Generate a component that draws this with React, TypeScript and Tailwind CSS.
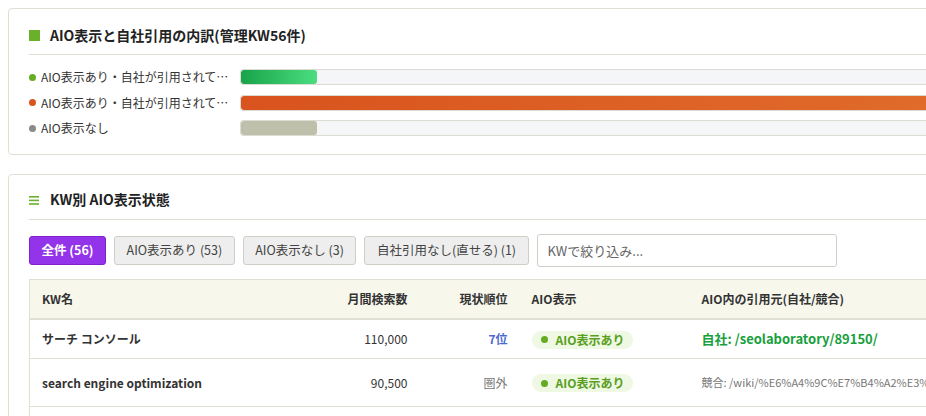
import React from 'react';

const font = { fontFamily: '"Noto Sans CJK JP", "Noto Sans", sans-serif' };

const breakdown = [
  { label: 'AIO表示あり・自社が引用されている', dot: 'bg-[#66ad22]', bar: 'bg-gradient-to-r from-[#16a34a] to-[#4ade80]', pct: 7.8 },
  { label: 'AIO表示あり・自社が引用されていない', dot: 'bg-[#d9531e]', bar: 'bg-gradient-to-r from-[#d9531e] to-[#e2742f]', pct: 100 },
  { label: 'AIO表示なし', dot: 'bg-[#8a8a8a]', bar: 'bg-[#bfc0ab]', pct: 7.8 },
];

const filters = [
  { label: '全件 (56)', active: true },
  { label: 'AIO表示あり (53)' },
  { label: 'AIO表示なし (3)' },
  { label: '自社引用なし(直せる) (1)' },
];

function Badge() {
  return (
    <span className="inline-flex h-[18px] items-center gap-2 rounded-full bg-[#eef8e2] px-[9px] text-[12px] leading-[18px] font-bold text-[#5a9e1e]">
      <span className="h-[7px] w-[7px] rounded-full bg-[#64ab1f]" />
      AIO表示あり
    </span>
  );
}

export default function App() {
  return (
    <div className="h-screen w-screen overflow-hidden bg-white text-[#333]" style={font}>
      <div className="flex w-[1240px] flex-col gap-[19px] p-2">
        {/* breakdown card */}
        <section className="rounded-[4px] border border-[#e0e0d2] bg-white px-5 pb-[18px] pt-[16px]">
          <h2 className="flex items-center gap-[10px] border-b border-[#e0e0d2] pb-[9px] text-[14px] leading-[20px] font-bold text-[#222]">
            <span className="h-[11px] w-[11px] bg-[#6bb02a]" />
            AIO表示と自社引用の内訳(管理KW56件)
          </h2>
          <div className="mt-[14px] flex flex-col gap-[9.5px]">
            {breakdown.map((b) => (
              <div key={b.label} className="flex h-[16px] items-center gap-[10px]">
                <div className="flex w-[201px] items-center gap-[5px] text-[12px] leading-[16px] text-[#333]">
                  <span className={`h-[7px] w-[7px] shrink-0 rounded-full ${b.dot}`} />
                  <span className="truncate">{b.label}</span>
                </div>
                <div className="h-[16px] flex-1 overflow-hidden rounded-[3px] border border-[#dcdcd2] bg-[#f5f6f8]">
                  <div className={`h-full rounded-[3px] ${b.bar}`} style={{ width: `${b.pct}%` }} />
                </div>
              </div>
            ))}
          </div>
        </section>

        {/* keyword status card */}
        <section className="rounded-[4px] border border-[#e0e0d2] bg-white px-5 pt-[14px]">
          <h2 className="flex items-center gap-[10px] border-b border-[#e0e0d2] pb-[10px] text-[14px] leading-[20px] font-bold text-[#222]">
            <svg width="11" height="9" viewBox="0 0 11 9" className="mt-[2px]">
              <rect x="0" y="0" width="10" height="1.6" fill="#6bb02a" />
              <rect x="0" y="3.6" width="10" height="1.6" fill="#6bb02a" />
              <rect x="0" y="7.2" width="10" height="1.6" fill="#6bb02a" />
            </svg>
            KW別 AIO表示状態
          </h2>

          <div className="mt-[14px] flex items-center gap-2">
            {filters.map((f) =>
              f.active ? (
                <button
                  key={f.label}
                  className="h-[29px] rounded-[3px] border border-[#7e22ce] bg-[#9333ea] px-[11.5px] text-[12.5px] font-bold text-white"
                >
                  {f.label}
                </button>
              ) : (
                <button
                  key={f.label}
                  className="h-[29px] rounded-[3px] border border-[#cfcfc8] bg-[#eeeeee] px-[11.5px] text-[12.5px] text-[#444]"
                >
                  {f.label}
                </button>
              )
            )}
            <input
              placeholder="KWで絞り込み..."
              className="h-[33px] w-[300px] rounded-[3px] border border-[#cfcfc8] px-[10px] text-[13px] placeholder:text-[#666]"
            />
          </div>

          <table className="mt-[12px] w-full table-fixed border-collapse border border-[#e0e0d2] text-[12px]">
            <colgroup>
              <col className="w-[270px]" />
              <col className="w-[120px]" />
              <col className="w-[100px]" />
              <col className="w-[170px]" />
              <col />
            </colgroup>
            <thead>
              <tr className="h-[39px] border-b-2 border-[#e0e0d2] bg-[#f7f7ec] text-left font-bold text-[#333]">
                <th className="px-3">KW名</th>
                <th className="px-3 text-right">月間検索数</th>
                <th className="px-3 text-right">現状順位</th>
                <th className="px-3">AIO表示</th>
                <th className="px-3">AIO内の引用元(自社/競合)</th>
              </tr>
            </thead>
            <tbody>
              <tr className="h-[40px] border-b border-[#e0e0d2]">
                <td className="px-3 font-bold">サーチ コンソール</td>
                <td className="px-3 text-right">110,000</td>
                <td className="px-3 text-right font-bold text-[#4d68d1]">7位</td>
                <td className="px-3">
                  <Badge />
                </td>
                <td className="px-3 text-[13px] font-bold text-[#17a03d]">自社: /seolaboratory/89150/</td>
              </tr>
              <tr className="h-[48px] border-b border-[#e0e0d2]">
                <td className="px-3 font-bold">search engine optimization</td>
                <td className="px-3 text-right">90,500</td>
                <td className="px-3 text-right text-[#777]">圏外</td>
                <td className="px-3">
                  <Badge />
                </td>
                <td className="whitespace-nowrap px-3 text-[11px] text-[#777]">
                  競合: /wiki/%E6%A4%9C%E7%B4%A2%E3%82%A8%E3%83%B3%E3%82%B8%E3%83%B3
                </td>
              </tr>
              <tr className="h-[40px]">
                <td className="px-3 font-bold">SEO対策</td>
                <td className="px-3 text-right">49,500</td>
                <td className="px-3 text-right" />
                <td className="px-3" />
                <td className="px-3" />
              </tr>
            </tbody>
          </table>
        </section>
      </div>
    </div>
  );
}
